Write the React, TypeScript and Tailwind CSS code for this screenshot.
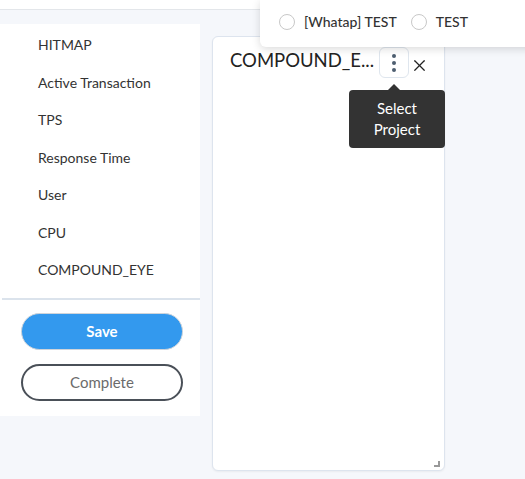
import { X } from "lucide-react";

const menuItems = [
    "HITMAP",
    "Active Transaction",
    "TPS",
    "Response Time",
    "User",
    "CPU",
    "COMPOUND_EYE",
];

function Sidebar() {
    return (
        <div className="mt-[14px] w-[200px] shrink-0 self-start bg-white pb-[15px]">
            <ul className="pt-[2px]">
                {menuItems.map((item) => (
                    <li key={item} className="flex h-[37.5px] items-center pl-[38px] text-[14px] text-[#333]">
                        {item}
                    </li>
                ))}
            </ul>
            <div className="ml-[2px] mt-[9px] h-[2px] bg-[#dbe3ec]" />
            <div className="ml-[21px] mt-[13px] flex w-[162px] flex-col gap-[14px]">
                <button className="h-[37px] rounded-full border border-[#cfd4da] bg-[#3399ee] text-[15px] font-bold text-white">
                    Save
                </button>
                <button className="h-[37px] rounded-full border-2 border-[#4a5058] bg-white text-[15px] text-[#6b6b6b]">
                    Complete
                </button>
            </div>
        </div>
    );
}

function WidgetCard() {
    return (
        <div className="relative ml-[12px] mt-[26px] h-[435px] w-[233px] rounded-md border border-[#dde4ee] bg-white shadow-[0_1px_2px_rgba(0,0,0,0.05)]">
            <div className="flex items-start pl-[17px] pt-[10px]">
                <span className="w-[149px] whitespace-nowrap text-[18.5px] leading-[26px] text-[#222]">COMPOUND_E...</span>
                <button className="flex h-[31px] w-[30px] flex-col items-center justify-center gap-[3px] rounded-md border border-[#dfe6ee] bg-white">
                    <span className="h-[4px] w-[4px] rounded-full bg-[#4d5e70]" />
                    <span className="h-[4px] w-[4px] rounded-full bg-[#4d5e70]" />
                    <span className="h-[4px] w-[4px] rounded-full bg-[#4d5e70]" />
                </button>
                <X className="ml-[1px] mt-[9px] text-[#222]" size={19} strokeWidth={1.5} />
            </div>

            {/* tooltip */}
            <div className="absolute left-[136px] top-[47px] w-[96px]">
                <div className="mx-auto h-0 w-0 translate-x-[-3px] border-x-[6px] border-b-[6px] border-x-transparent border-b-[#333]" />
                <div className="rounded-sm bg-[#333] py-[8px] text-center text-[15px] leading-[21px] text-white">
                    Select
                    <br />
                    Project
                </div>
            </div>

            {/* resize handle */}
            <div className="absolute bottom-[3px] right-[4px] h-[6px] w-[6px] border-b-2 border-r-2 border-[#999]" />
        </div>
    );
}

function ProjectPopover() {
    return (
        <div className="absolute left-[260px] top-0 flex h-[47px] w-[280px] items-center gap-[14px] rounded-bl-md bg-white pb-[4px] pl-[19px] shadow-[0_2px_8px_rgba(0,0,0,0.15)]">
            {["[Whatap] TEST", "TEST"].map((name) => (
                <label key={name} className="flex items-center gap-[9px] text-[14px] font-medium text-[#333]">
                    <span className="h-[16px] w-[16px] rounded-full border border-[#c8c8c8] bg-white" />
                    {name}
                </label>
            ))}
        </div>
    );
}

export default function App() {
    return (
        <div className="relative h-[479px] w-[525px] overflow-hidden bg-[#f5f7fb] font-['Lato',sans-serif]">
            <div className="h-[10px] border-b border-[#e3e6ea] bg-white" />
            <div className="flex">
                <Sidebar />
                <WidgetCard />
            </div>
            <ProjectPopover />
        </div>
    );
}
